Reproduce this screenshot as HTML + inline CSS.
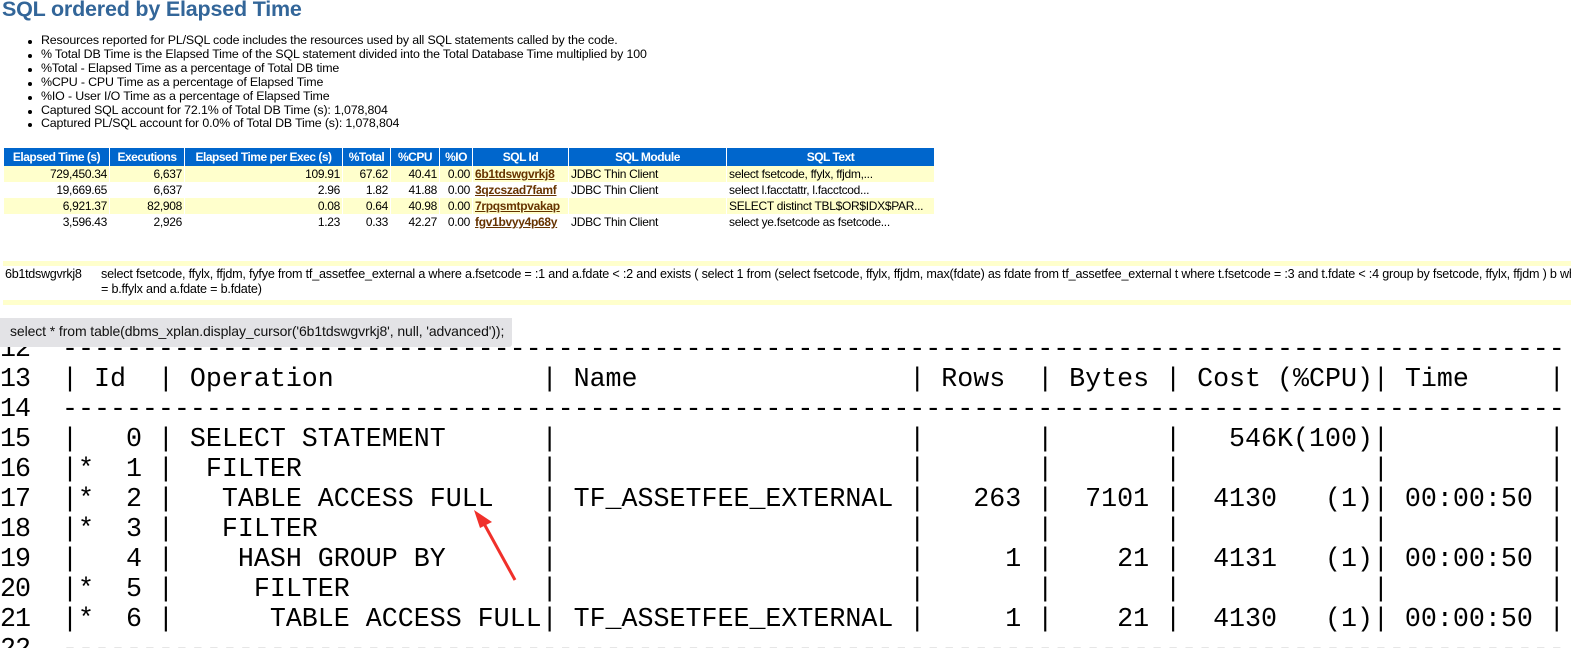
<!DOCTYPE html>
<html><head><meta charset="utf-8"><style>
*{margin:0;padding:0;box-sizing:border-box}
html,body{width:1571px;height:648px;overflow:hidden}
body{background:#fff;position:relative;font-family:"Liberation Sans",Arial,sans-serif}
.a{position:absolute;white-space:pre}
h1{position:absolute;left:2px;top:-3px;font-size:21.5px;font-weight:bold;color:#336699;letter-spacing:-0.2px}
ul{position:absolute;left:41px;top:34px;font-size:12.4px;line-height:13.9px;color:#000;list-style:none}
ul li:before{content:"";position:absolute;left:-13px;width:4px;height:4px;border-radius:50%;background:#000;margin-top:6px}
ul li{position:relative;letter-spacing:-0.15px}
table{position:absolute;left:3px;top:148px;border-collapse:separate;border-spacing:1px 0;font-size:12px}
th{background:#0066cc;color:#fff;font-weight:bold;height:18px;padding:0 2px;text-align:center;letter-spacing:-0.5px}
td{height:16px;padding:0 2px;text-align:right;letter-spacing:-0.3px}
tr.y td{background:#ffffcc}
td.l{text-align:left}
td u{color:#663300;font-weight:bold}
.pl{position:absolute;left:62px;top:335px;font-family:"Liberation Mono",monospace;font-size:26.65px;line-height:30px;white-space:pre;color:#000}
.ln{position:absolute;left:0;top:335px;font-family:"Liberation Mono",monospace;font-size:26.65px;line-height:30px;white-space:pre;color:#000;letter-spacing:-1px}
.clip{position:absolute;overflow:hidden}
</style></head><body>
<h1>SQL ordered by Elapsed Time</h1>
<ul>
<li>Resources reported for PL/SQL code includes the resources used by all SQL statements called by the code.</li>
<li>% Total DB Time is the Elapsed Time of the SQL statement divided into the Total Database Time multiplied by 100</li>
<li>%Total - Elapsed Time as a percentage of Total DB time</li>
<li>%CPU - CPU Time as a percentage of Elapsed Time</li>
<li>%IO - User I/O Time as a percentage of Elapsed Time</li>
<li>Captured SQL account for 72.1% of Total DB Time (s): 1,078,804</li>
<li>Captured PL/SQL account for 0.0% of Total DB Time (s): 1,078,804</li>
</ul>
<table>
<tr><th style="width:105px">Elapsed Time (s)</th><th style="width:74px">Executions</th><th style="width:157px">Elapsed Time per Exec (s)</th><th style="width:47px">%Total</th><th style="width:48px">%CPU</th><th style="width:32px">%IO</th><th style="width:95px">SQL Id</th><th style="width:157px">SQL Module</th><th style="width:207px">SQL Text</th></tr>
<tr class="y"><td>729,450.34</td><td>6,637</td><td>109.91</td><td>67.62</td><td>40.41</td><td>0.00</td><td class="l"><u>6b1tdswgvrkj8</u></td><td class="l">JDBC Thin Client</td><td class="l">select fsetcode, ffylx, ffjdm,...</td></tr>
<tr><td>19,669.65</td><td>6,637</td><td>2.96</td><td>1.82</td><td>41.88</td><td>0.00</td><td class="l"><u>3qzcszad7famf</u></td><td class="l">JDBC Thin Client</td><td class="l">select l.facctattr, l.facctcod...</td></tr>
<tr class="y"><td>6,921.37</td><td>82,908</td><td>0.08</td><td>0.64</td><td>40.98</td><td>0.00</td><td class="l"><u>7rpqsmtpvakap</u></td><td class="l"></td><td class="l">SELECT distinct TBL$OR$IDX$PAR...</td></tr>
<tr><td>3,596.43</td><td>2,926</td><td>1.23</td><td>0.33</td><td>42.27</td><td>0.00</td><td class="l"><u>fgv1bvyy4p68y</u></td><td class="l">JDBC Thin Client</td><td class="l">select ye.fsetcode as fsetcode...</td></tr>
</table>
<div class="a" style="left:3px;top:261px;width:1568px;height:5px;background:#ffffcc"></div>
<div class="a" style="left:5px;top:267px;font-size:12.6px;letter-spacing:-0.3px">6b1tdswgvrkj8</div>
<div class="clip" style="left:101px;top:267px;width:1470px;height:32px"><div style="white-space:pre;font-size:12.6px;line-height:14.5px;letter-spacing:-0.2px">select fsetcode, ffylx, ffjdm, fyfye from tf_assetfee_external a where a.fsetcode = :1 and a.fdate &lt; :2 and exists ( select 1 from (select fsetcode, ffylx, ffjdm, max(fdate) as fdate from tf_assetfee_external t where t.fsetcode = :3 and t.fdate &lt; :4 group by fsetcode, ffylx, ffjdm ) b wher
= b.ffylx and a.fdate = b.fdate)</div></div>
<div class="a" style="left:3px;top:300px;width:1568px;height:5px;background:#ffffcc"></div>
<div class="ln">12
13
14
15
16
17
18
19
20
21
22</div>
<div class="clip" style="left:0;top:0;width:1571px;height:648px"><div class="pl">----------------------------------------------------------------------------------------------
| Id  | Operation             | Name                 | Rows  | Bytes | Cost (%CPU)| Time     |
----------------------------------------------------------------------------------------------
|   0 | SELECT STATEMENT      |                      |       |       |   546K(100)|          |
|*  1 |  FILTER               |                      |       |       |            |          |
|*  2 |   TABLE ACCESS FULL   | TF_ASSETFEE_EXTERNAL |   263 |  7101 |  4130   (1)| 00:00:50 |
|*  3 |   FILTER              |                      |       |       |            |          |
|   4 |    HASH GROUP BY      |                      |     1 |    21 |  4131   (1)| 00:00:50 |
|*  5 |     FILTER            |                      |       |       |            |          |
|*  6 |      TABLE ACCESS FULL| TF_ASSETFEE_EXTERNAL |     1 |    21 |  4130   (1)| 00:00:50 |
----------------------------------------------------------------------------------------------</div></div>
<div class="a" style="left:0;top:318px;width:512px;height:29px;background:#e3e3e6;border-radius:0 0 3px 0"></div>
<div class="a" style="left:10px;top:323px;font-size:14px;color:#111;letter-spacing:-0.1px">select * from table(dbms_xplan.display_cursor('6b1tdswgvrkj8', null, 'advanced'));</div>
<svg class="a" style="left:0;top:0" width="1571" height="648"><line x1="515" y1="580" x2="482" y2="520" stroke="#f0302a" stroke-width="3"/><polygon points="474,510 492,522 480,528" fill="#f0302a"/></svg>
</body></html>
